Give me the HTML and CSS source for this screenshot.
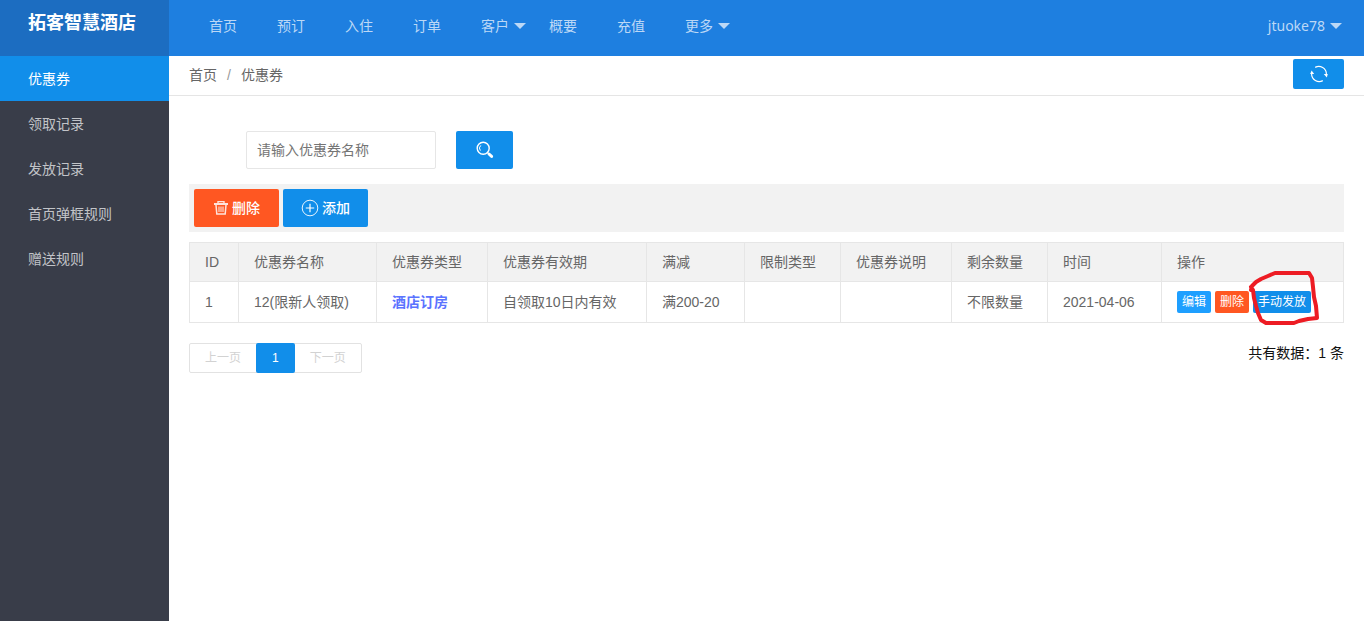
FILE: index.html
```html
<!DOCTYPE html>
<html lang="zh-CN">
<head>
  <meta charset="UTF-8">
  <meta name="viewport" content="width=device-width, initial-scale=1.0">
  <title>优惠券</title>
  <link rel="stylesheet" href="styles.css">
</head>
<body>
  <header class="header">
    <h1 class="logo">拓客智慧酒店</h1>
    <nav class="nav">
      <a href="#">首页</a>
      <a href="#">预订</a>
      <a href="#">入住</a>
      <a href="#">订单</a>
      <a href="#">客户<span class="caret"></span></a>
      <a href="#">概要</a>
      <a href="#">充值</a>
      <a href="#">更多<span class="caret"></span></a>
    </nav>
    <a href="#" class="user">jtuoke78<span class="caret"></span></a>
  </header>

  <div class="layout">
    <aside class="side">
      <a href="#" class="active">优惠券</a>
      <a href="#">领取记录</a>
      <a href="#">发放记录</a>
      <a href="#">首页弹框规则</a>
      <a href="#">赠送规则</a>
    </aside>

    <main class="main">
      <div class="crumbs">
        <div class="crumb-path">
          <a href="#">首页</a><span class="slash">/</span><a href="#">优惠券</a>
        </div>
        <button type="button" class="btn btn-refresh" aria-label="刷新">
          <svg width="18" height="18" viewBox="0 0 18 18" fill="none" stroke="#fff" stroke-width="1.2">
            <path d="M5.2 2.4A7.6 7.6 0 0 1 16.4 9"/>
            <path d="M12.8 15.6A7.6 7.6 0 0 1 1.6 9"/>
            <path d="M13.8 9h4l-1 3.6z" fill="#fff" stroke="none"/>
            <path d="M.2 9h4L1.6 5.4z" fill="#fff" stroke="none"/>
          </svg>
        </button>
      </div>

      <div class="content">
        <form class="search">
          <input type="text" name="name" placeholder="请输入优惠券名称" aria-label="优惠券名称">
          <button type="button" class="btn btn-search" aria-label="搜索">
            <svg width="18" height="18" viewBox="0 0 18 18" fill="none" stroke="#fff">
              <circle cx="7.2" cy="7.2" r="6" stroke-width="1.4"/>
              <path d="M4.4 9.6A3.8 3.8 0 0 1 4.8 4.4" stroke-width="1"/>
              <path d="M11.4 11.4l1.6 1.6" stroke-width="1.2"/>
              <path d="M13 13l2.6 2.4" stroke-width="3" stroke-linecap="round"/>
            </svg>
          </button>
        </form>

        <div class="toolbar">
          <button type="button" class="btn btn-danger">
            <svg width="16" height="16" viewBox="0 0 16 16" fill="none" stroke="#ffe3db">
              <path d="M1 4h14" stroke-width="2"/>
              <path d="M5 3.2V1.6h6v1.6" stroke-width="1.4"/>
              <path d="M3 5l.8 9h8.4l.8-9" stroke-width="1.5"/>
              <path d="M6 6.5V12M8 6.5V12M10 6.5V12" stroke-width="1.1"/>
            </svg>
            删除
          </button>
          <button type="button" class="btn">
            <svg width="18" height="18" viewBox="0 0 18 18" fill="none" stroke="#fff">
              <circle cx="9" cy="9" r="7.8" stroke-width=".9"/>
              <path d="M9 4.8v8.4M4.8 9h8.4" stroke-width="1.2"/>
            </svg>
            添加
          </button>
        </div>

        <table class="table">
          <colgroup>
            <col class="c-id"><col class="c-name"><col class="c-type"><col class="c-valid"><col class="c-cut">
            <col class="c-limit"><col class="c-desc"><col class="c-left"><col class="c-time"><col class="c-ops">
          </colgroup>
          <thead>
            <tr>
              <th>ID</th>
              <th>优惠券名称</th>
              <th>优惠券类型</th>
              <th>优惠券有效期</th>
              <th>满减</th>
              <th>限制类型</th>
              <th>优惠券说明</th>
              <th>剩余数量</th>
              <th>时间</th>
              <th>操作</th>
            </tr>
          </thead>
          <tbody>
            <tr>
              <td>1</td>
              <td>12(限新人领取)</td>
              <td><b class="type">酒店订房</b></td>
              <td>自领取10日内有效</td>
              <td>满200-20</td>
              <td></td>
              <td></td>
              <td>不限数量</td>
              <td>2021-04-06</td>
              <td>
                <div class="ops">
                  <button type="button" class="btn-mini mini-edit">编辑</button>
                  <button type="button" class="btn-mini mini-del">删除</button>
                  <div class="marked">
                    <button type="button" class="btn-mini">手动发放</button>
                    <svg class="mark" width="76" height="58" viewBox="0 0 76 58" fill="none" stroke="#ed1c24" stroke-width="4" stroke-linecap="round" stroke-linejoin="round">
                      <path d="M3 20L4 16L8 12L13 9L20 6L27 3L44 3L61 3L64 8L65 17L66 27L68 36L69 48L60 49L51 51L46 53H18L13 50L10 43L8 36L6 28L5 20L3 17"/>
                    </svg>
                  </div>
                </div>
              </td>
            </tr>
          </tbody>
        </table>

        <div class="footer">
          <nav class="pager">
            <a href="#" class="disabled">上一页</a>
            <a href="#" class="current">1</a>
            <a href="#" class="disabled">下一页</a>
          </nav>
          <span class="total">共有数据：1 条</span>
        </div>
      </div>
    </main>
  </div>
</body>
</html>
```

FILE: styles.css
```css
* {
  box-sizing: border-box;
}

body {
  margin: 0;
  min-height: 100vh;
  display: flex;
  flex-direction: column;
  font: 14px/24px "Liberation Sans", "Noto Sans CJK SC", sans-serif;
  color: #666;
  background: #fff;
}

a {
  color: inherit;
  text-decoration: none;
}

button,
input {
  font: inherit;
}

/* top bar */
.header {
  display: flex;
  height: 56px;
  background: #1e7fe0;
  color: #bcd8f6;
}

.logo {
  width: 169px;
  margin: 0;
  padding-left: 28px;
  background: #1c6dc1;
  color: #fff;
  font-size: 18px;
  line-height: 46px;
}

.nav {
  display: flex;
  flex: 1;
  padding-left: 20px;
  line-height: 52px;
}

.nav a {
  width: 68px;
  padding-left: 20px;
}

.caret {
  display: inline-block;
  margin-left: 5px;
  vertical-align: 2px;
  border: 6px solid transparent;
  border-top-color: #bcd8f6;
  border-bottom: 0;
}

.user {
  padding-right: 22px;
  font-family: "Noto Sans", sans-serif;
  line-height: 52px;
}

.layout {
  display: flex;
  flex: 1;
}

/* left menu */
.side {
  width: 169px;
  background: #393d49;
  color: #c2c4c8;
}

.side a {
  display: block;
  height: 45px;
  padding-left: 28px;
  line-height: 46px;
}

.side .active {
  background: #118eea;
  color: #fff;
}

.main {
  flex: 1;
}

.crumbs {
  display: flex;
  justify-content: space-between;
  align-items: flex-start;
  height: 40px;
  padding: 3px 20px 0;
  border-bottom: 1px solid #e5e5e5;
}

.crumb-path {
  line-height: 32px;
}

.slash {
  margin: 0 10px;
  color: #999;
}

/* buttons */
.btn {
  display: inline-flex;
  align-items: center;
  justify-content: center;
  gap: 3px;
  height: 38px;
  padding: 0;
  border: 0;
  border-radius: 2px;
  background: #118eea;
  color: #fff;
  white-space: nowrap;
  cursor: pointer;
}

.btn:hover,
.btn-mini:hover {
  opacity: 0.8;
}

.btn-refresh {
  height: 30px;
  width: 51px;
}

.btn-search {
  width: 57px;
}

.btn-danger {
  background: #ff5722;
}

.content {
  padding: 35px 20px;
}

.search {
  display: flex;
  gap: 20px;
  padding-left: 57px;
}

.search input {
  width: 190px;
  height: 38px;
  padding: 0 10px;
  border: 1px solid #e6e6e6;
  border-radius: 2px;
}

.search input::placeholder {
  color: #757575;
}

.toolbar {
  display: flex;
  gap: 4px;
  margin: 15px 0 10px;
  padding: 5px;
  background: #f2f2f2;
}

.toolbar .btn {
  width: 85px;
  font-weight: 500;
}

/* coupon list */
.table {
  width: 100%;
  table-layout: fixed;
  border-collapse: collapse;
}

.table th,
.table td {
  height: 39px;
  padding: 7px 15px;
  border: 1px solid #e6e6e6;
  font-weight: 400;
  text-align: left;
  white-space: nowrap;
}

.table td {
  height: 41px;
}

.table th {
  background: #f2f2f2;
}

.c-id { width: 49px; }
.c-name { width: 138px; }
.c-type { width: 111px; }
.c-valid { width: 159px; }
.c-cut { width: 98px; }
.c-limit { width: 96px; }
.c-desc { width: 111px; }
.c-left { width: 96px; }
.c-time { width: 114px; }

.table .type {
  color: #5b73ff;
}

.ops {
  display: flex;
  gap: 4px;
}

.btn-mini {
  display: block;
  height: 22px;
  padding: 0 5px;
  border: 0;
  border-radius: 2px;
  background: #118eea;
  color: #fff;
  font-size: 12px;
  line-height: 22px;
  cursor: pointer;
}

.mini-edit {
  background: #1e9fff;
}

.mini-del {
  background: #ff5722;
}

.marked {
  position: relative;
}

/* hand-drawn ring over the button */
.mark {
  position: absolute;
  top: -21px;
  left: -5px;
  pointer-events: none;
}

.footer {
  display: flex;
  justify-content: space-between;
  align-items: flex-start;
  margin-top: 20px;
}

.pager {
  display: flex;
  border: 1px solid #e2e2e2;
  border-radius: 2px;
  font-size: 12px;
  line-height: 28px;
}

.pager a {
  padding: 0 15px;
}

.pager .disabled {
  color: #d2d2d2;
}

.pager .current {
  margin: -1px 0;
  padding: 1px 16px;
  border-radius: 2px;
  background: #118eea;
  color: #fff;
}

.total {
  color: #111;
  line-height: 20px;
}
```
